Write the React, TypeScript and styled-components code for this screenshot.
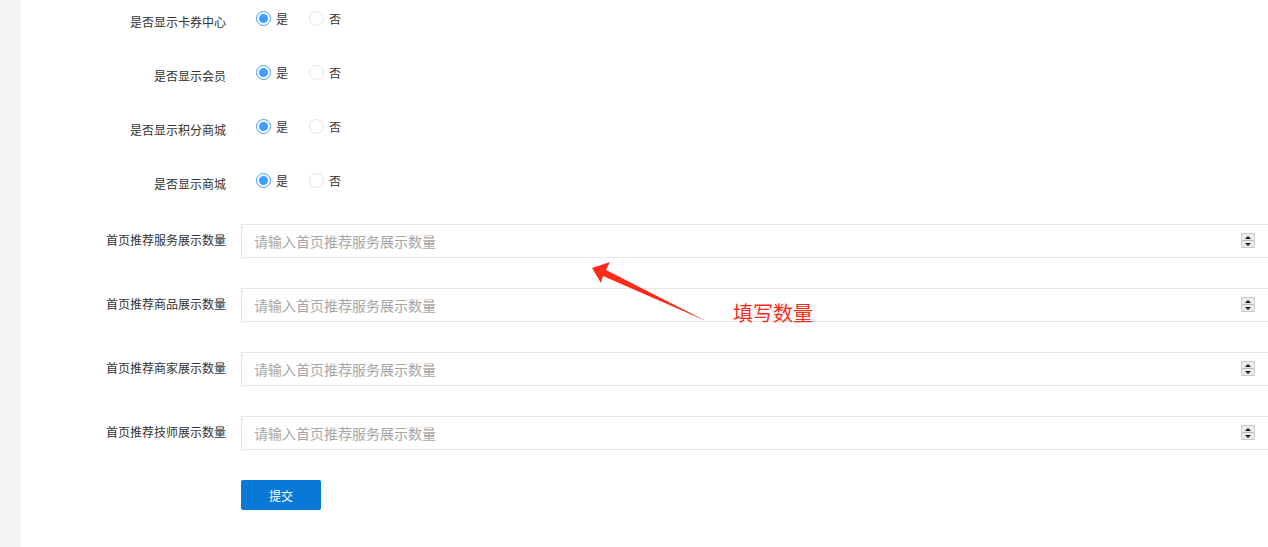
import React from 'react';
import styled, { createGlobalStyle } from 'styled-components';

const GlobalStyle = createGlobalStyle`
  html, body {
    margin: 0;
    padding: 0;
    background: #ffffff;
    overflow: hidden;
  }
  body {
    font-family: "Liberation Sans", "Noto Sans CJK SC", sans-serif;
  }
`;

const Page = styled.div`
  display: flex;
  height: 547px;
  width: 1268px;
  overflow: hidden;
  position: relative;
`;

const SideStrip = styled.div`
  background: #f4f5f7;
  flex: 0 0 21px;
`;

const Main = styled.div`
  background: #ffffff;
  flex: 1;
  min-width: 0;
  padding-top: 6px;
`;

const Row = styled.div<{ $gap: number }>`
  align-items: flex-start;
  display: flex;
  margin-bottom: ${(props) => props.$gap}px;
`;

const Label = styled.div`
  box-sizing: border-box;
  color: #333333;
  flex: 0 0 220px;
  font-size: 12px;
  line-height: 34px;
  padding-right: 15px;
  text-align: right;
  white-space: nowrap;
`;

const RadioGroup = styled.div`
  align-items: center;
  display: flex;
  gap: 21px;
  height: 24px;
  margin-left: 15px;
`;

const RadioItem = styled.label`
  align-items: center;
  color: #333333;
  display: flex;
  font-size: 12px;
  gap: 5px;
`;

const RadioCircle = styled.span<{ $checked?: boolean }>`
  align-items: center;
  border: 1px solid ${(props) => (props.$checked ? '#409eff' : '#e2e4e8')};
  border-radius: 50%;
  box-sizing: border-box;
  display: flex;
  height: 15px;
  justify-content: center;
  width: 15px;

  &::after {
    background: #409eff;
    border-radius: 50%;
    content: '';
    display: ${(props) => (props.$checked ? 'block' : 'none')};
    height: 9px;
    width: 9px;
  }
`;

const InputBox = styled.div`
  align-items: center;
  border: 1px solid #e6e6e6;
  box-sizing: border-box;
  color: #a6a6a6;
  display: flex;
  flex: 0 0 1060px;
  font-size: 14px;
  height: 34px;
  padding-left: 12px;
  position: relative;
`;

const Spinner = styled.div`
  background: #ebebeb;
  border: 1px solid #c9c9c9;
  box-sizing: border-box;
  display: flex;
  flex-direction: column;
  height: 15px;
  left: 999px;
  position: absolute;
  top: 8px;
  width: 14px;
`;

const SpinHalf = styled.div<{ $down?: boolean }>`
  align-items: center;
  border-top: ${(props) => (props.$down ? '1px solid #b8b8b8' : 'none')};
  display: flex;
  flex: 1;
  justify-content: center;

  &::after {
    border-left: 3px solid transparent;
    border-right: 3px solid transparent;
    ${(props) =>
      props.$down ? 'border-top: 3px solid #111;' : 'border-bottom: 3px solid #111;'}
    content: '';
    height: 0;
    width: 0;
  }
`;

const ButtonRow = styled.div`
  display: flex;
  padding-left: 220px;
`;

const SubmitButton = styled.button`
  background: #0a78d7;
  border: none;
  border-radius: 2px;
  color: #ffffff;
  font-family: inherit;
  font-size: 12px;
  height: 30px;
  width: 80px;
`;

const Annotation = styled.div`
  left: 0;
  pointer-events: none;
  position: absolute;
  top: 0;
`;

const AnnotationText = styled.div`
  color: #ff2a1a;
  font-size: 20px;
  left: 733px;
  line-height: 24px;
  position: absolute;
  top: 302px;
  white-space: nowrap;
`;

const radioRows = ['是否显示卡券中心', '是否显示会员', '是否显示积分商城', '是否显示商城'];
const inputRows = ['首页推荐服务展示数量', '首页推荐商品展示数量', '首页推荐商家展示数量', '首页推荐技师展示数量'];

export default function App() {
  return (
    <Page>
      <GlobalStyle />
      <SideStrip />
      <Main>
        {radioRows.map((label, i) => (
          <Row key={label} $gap={i === radioRows.length - 1 ? 22 : 20}>
            <Label>{label}</Label>
            <RadioGroup>
              <RadioItem>
                <RadioCircle $checked />
                是
              </RadioItem>
              <RadioItem>
                <RadioCircle />
                否
              </RadioItem>
            </RadioGroup>
          </Row>
        ))}
        {inputRows.map((label) => (
          <Row key={label} $gap={30}>
            <Label>{label}</Label>
            <InputBox>
              请输入首页推荐服务展示数量
              <Spinner>
                <SpinHalf />
                <SpinHalf $down />
              </Spinner>
            </InputBox>
          </Row>
        ))}
        <ButtonRow>
          <SubmitButton>提交</SubmitButton>
        </ButtonRow>
      </Main>
      <Annotation>
        <svg width="1268" height="547" viewBox="0 0 1268 547">
          <polygon
            points="592,268 610,262 606,270 706,321 603,276 601,283"
            fill="#ff2a1a"
          />
        </svg>
        <AnnotationText>填写数量</AnnotationText>
      </Annotation>
    </Page>
  );
}
